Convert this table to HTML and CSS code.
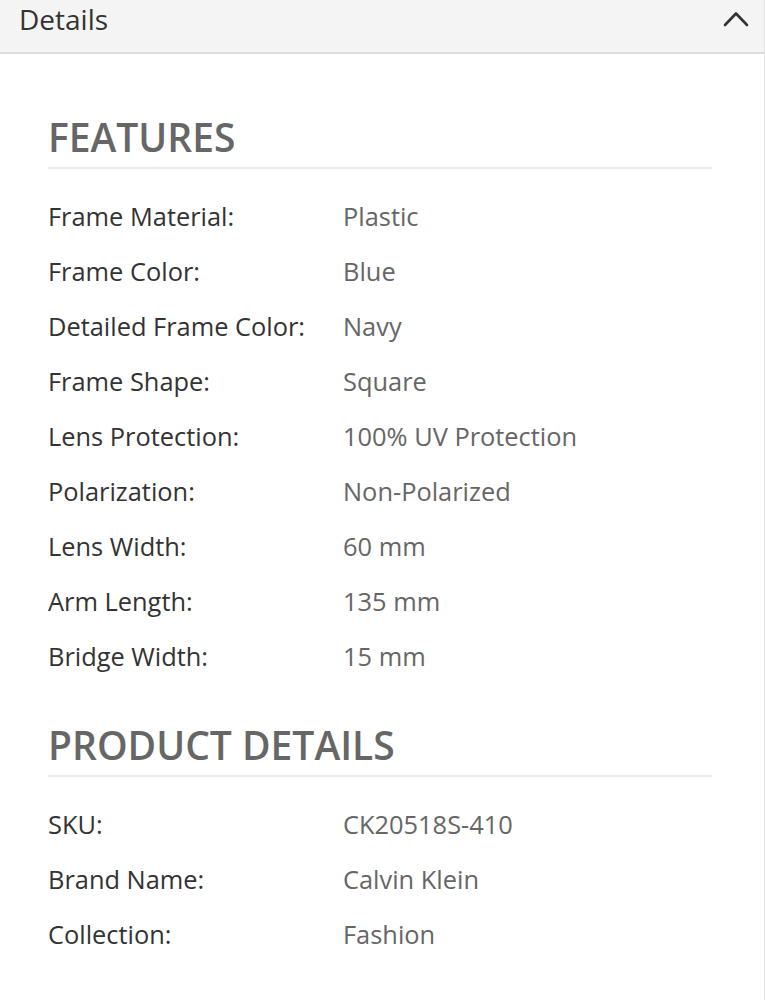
FILE: index.html
```html
<!DOCTYPE html>
<html lang="en">
<head>
<meta charset="utf-8">
<title>Details</title>
<link rel="stylesheet" href="styles.css">
</head>
<body>
<div class="panel">
  <div class="panel-head">
    <span class="panel-title">Details</span>
    <svg class="chevron" width="28" height="18" viewBox="0 0 28 18" aria-hidden="true">
      <polyline points="2,15 13,3.5 24,15" fill="none" stroke="#333" stroke-width="2.6" stroke-linecap="round" stroke-linejoin="round"/>
    </svg>
  </div>
  <div class="panel-body">
    <h2 class="section-title">FEATURES</h2>
    <dl class="specs">
      <dt>Frame Material:</dt><dd>Plastic</dd>
      <dt>Frame Color:</dt><dd>Blue</dd>
      <dt>Detailed Frame Color:</dt><dd>Navy</dd>
      <dt>Frame Shape:</dt><dd>Square</dd>
      <dt>Lens Protection:</dt><dd>100% UV Protection</dd>
      <dt>Polarization:</dt><dd>Non-Polarized</dd>
      <dt>Lens Width:</dt><dd>60 mm</dd>
      <dt>Arm Length:</dt><dd>135 mm</dd>
      <dt>Bridge Width:</dt><dd>15 mm</dd>
    </dl>
    <h2 class="section-title section-gap">PRODUCT DETAILS</h2>
    <dl class="specs">
      <dt>SKU:</dt><dd>CK20518S-410</dd>
      <dt>Brand Name:</dt><dd>Calvin Klein</dd>
      <dt>Collection:</dt><dd>Fashion</dd>
    </dl>
  </div>
</div>
</body>
</html>
```
FILE: styles.css
```css
* { box-sizing: border-box; }
html, body { margin: 0; padding: 0; background: #fff; }
body {
  font-family: "Open Sans", "Noto Sans", "Liberation Sans", sans-serif;
  width: 765px;
  min-height: 1000px;
}
.panel {
  border-right: 1px solid #e2e2e2;
  min-height: 1000px;
}
.panel-head {
  height: 54px;
  background: #f4f4f4;
  border-bottom: 2px solid #dcdcdc;
  display: flex;
  justify-content: space-between;
  align-items: flex-start;
  padding: 0 13px 0 19px;
}
.panel-title {
  font-size: 28px;
  line-height: 38px;
  color: #333;
}
.chevron { margin-top: 10px; }
.panel-body {
  padding: 60px 52px 40px 48px;
}
.section-title {
  margin: 0;
  font-size: 39px;
  line-height: 46px;
  font-weight: 600;
  color: #666;
  padding-bottom: 7px;
  border-bottom: 2px solid #e9e9e9;
}
.section-gap { margin-top: 38px; }
.specs {
  margin: 20px 0 0;
  display: grid;
  grid-template-columns: 295px 1fr;
  font-size: 25.4px;
  line-height: 55px;
}
.specs dt { color: #333; margin: 0; }
.specs dd { color: #666; margin: 0; }
```
